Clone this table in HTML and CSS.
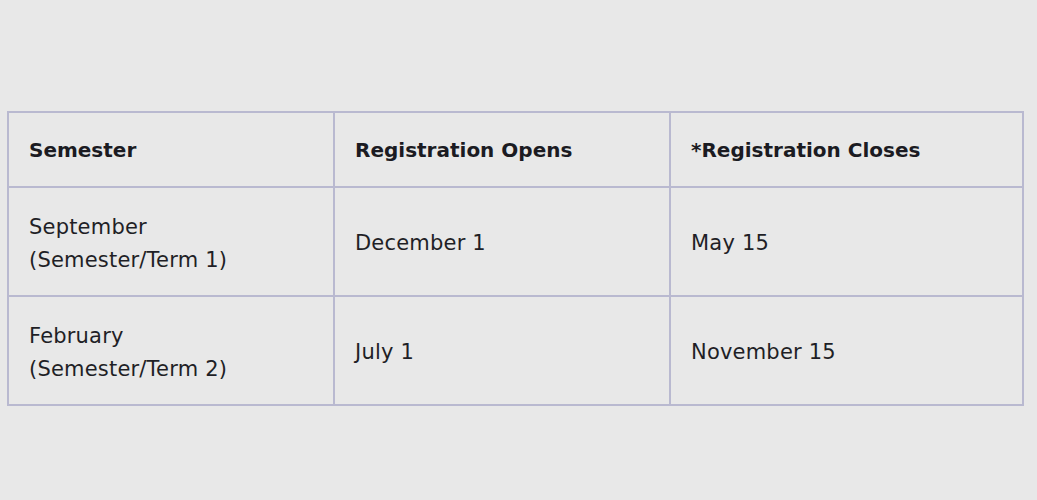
FILE: index.html
```html
<!DOCTYPE html>
<html>
<head>
<meta charset="utf-8">
<link rel="stylesheet" href="styles.css">
</head>
<body>
<div class="page">
  <table class="schedule">
    <colgroup>
      <col class="c1"><col class="c2"><col class="c3">
    </colgroup>
    <thead>
      <tr class="head-row">
        <th>Semester</th>
        <th>Registration Opens</th>
        <th>*Registration Closes</th>
      </tr>
    </thead>
    <tbody>
      <tr class="body-row">
        <td>September<br>(Semester/Term 1)</td>
        <td>December 1</td>
        <td>May 15</td>
      </tr>
      <tr class="body-row">
        <td>February<br>(Semester/Term 2)</td>
        <td>July 1</td>
        <td>November 15</td>
      </tr>
    </tbody>
  </table>
</div>
</body>
</html>
```

FILE: styles.css
```css
html, body {
  margin: 0;
  padding: 0;
  background: #e8e8e8;
}
.page {
  padding: 111px 0 0 7px;
  font-family: "DejaVu Sans", "Liberation Sans", sans-serif;
  color: #1f1f26;
}
.schedule {
  border-collapse: collapse;
  width: 1015px;
  table-layout: fixed;
}
.c1 { width: 326px; }
.c2 { width: 336px; }
.c3 { width: 353px; }
.schedule th, .schedule td {
  border: 2px solid #b9b9d0;
  text-align: left;
  vertical-align: middle;
  padding: 0 20px;
}
.schedule th {
  font-weight: 700;
  font-size: 20px;
  height: 73px;
  color: #1b1b22;
}
.schedule td {
  font-size: 21px;
  line-height: 33px;
  height: 103px;
  padding-top: 4px;
  font-weight: 400;
  letter-spacing: 0.2px;
}
```
